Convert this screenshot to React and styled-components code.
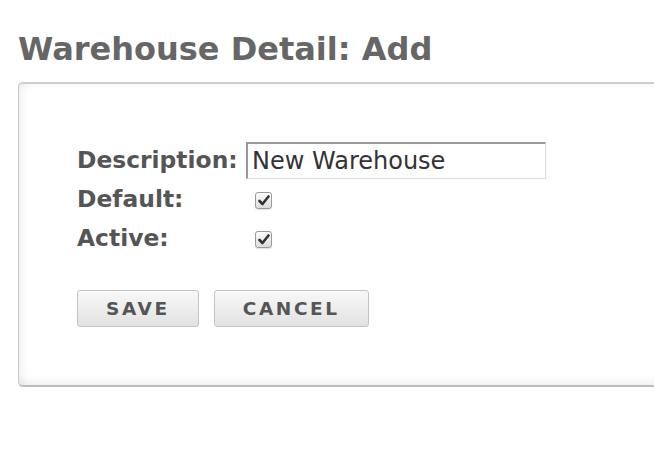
import React from "react";
import styled, { createGlobalStyle } from "styled-components";

const Global = createGlobalStyle`
  html, body { margin: 0; padding: 0; background: #fff; overflow: hidden; }
  body { font-family: "DejaVu Sans", Verdana, sans-serif; }
`;

const Page = styled.div`
  padding: 0 0 0 18px;
  width: 760px;
`;

const Title = styled.h1`
  margin: 0;
  padding-top: 31px;
  height: 82px;
  box-sizing: border-box;
  font-size: 32px;
  line-height: 37px;
  font-weight: bold;
  color: #666;
`;

const Panel = styled.div`
  width: 720px;
  box-sizing: border-box;
  border: 1px solid #c9c9c9;
  border-top: 2px solid #cdcdcd;
  border-bottom: 2px solid #bdbdbd;
  border-radius: 5px;
  padding: 58px 0 58px 58px;
  background: #fff;
  box-shadow: inset 8px 0 10px -6px rgba(0, 0, 0, 0.07),
    inset 0 -10px 12px -8px rgba(0, 0, 0, 0.08),
    inset 0 6px 8px -6px rgba(0, 0, 0, 0.06);
`;

const Form = styled.div`
  display: grid;
  grid-template-columns: 169px auto;
  grid-auto-rows: 36px;
  row-gap: 3px;
  align-items: center;
  justify-content: start;
`;

const Label = styled.label`
  font-size: 23.4px;
  font-weight: bold;
  color: #555;
  white-space: nowrap;
`;

const TextInput = styled.input`
  width: 300px;
  height: 37px;
  box-sizing: border-box;
  border: 1px solid #ddd;
  border-top: 2px solid #999;
  border-left: 2px solid #999;
  padding: 0 4px;
  font-family: "DejaVu Sans", Verdana, sans-serif;
  font-size: 24px;
  color: #333;
  background: #fff;
  outline: none;
  align-self: start;
`;

const CheckBox = styled.span`
  width: 17px;
  height: 17px;
  margin-left: 9px;
  margin-top: 2px;
  box-sizing: border-box;
  border: 1px solid #9a9a9a;
  border-radius: 3px;
  background: linear-gradient(#fdfdfd, #dcdcdc);
  box-shadow: 0 1px 1px rgba(0, 0, 0, 0.12);
  display: flex;
  align-items: center;
  justify-content: center;
`;

const Buttons = styled.div`
  display: flex;
  gap: 15px;
  margin-top: 34px;
`;

const Button = styled.button`
  height: 37px;
  padding: 0 28px;
  box-sizing: border-box;
  border: 1px solid #c4c4c4;
  border-radius: 3px;
  background: linear-gradient(#f8f8f8, #e2e2e2);
  font-family: "DejaVu Sans", Verdana, sans-serif;
  font-size: 18.5px;
  font-weight: bold;
  letter-spacing: 2.6px;
  color: #555;
  cursor: pointer;
`;

const Check = () => (
  <svg width="12" height="11" viewBox="0 0 12 11">
    <path d="M1.5 6 L4.5 9 L10.5 1.5" fill="none" stroke="#333" strokeWidth="2.6" strokeLinecap="round" strokeLinejoin="round" />
  </svg>
);

export default function App() {
  return (
    <Page>
      <Global />
      <Title>Warehouse Detail: Add</Title>
      <Panel>
        <Form>
          <Label>Description:</Label>
          <TextInput defaultValue="New Warehouse" />
          <Label>Default:</Label>
          <CheckBox><Check /></CheckBox>
          <Label>Active:</Label>
          <CheckBox><Check /></CheckBox>
        </Form>
        <Buttons>
          <Button>SAVE</Button>
          <Button>CANCEL</Button>
        </Buttons>
      </Panel>
    </Page>
  );
}
